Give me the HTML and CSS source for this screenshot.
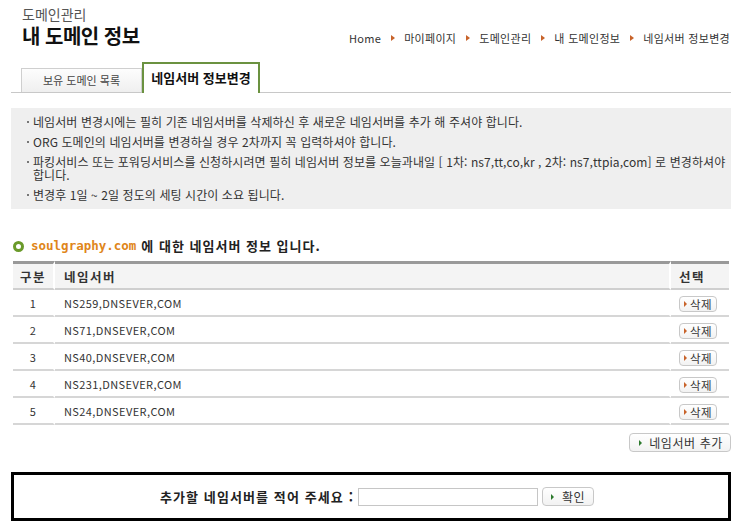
FILE: index.html
```html
<!DOCTYPE html>
<html lang="ko">
<head>
<meta charset="utf-8">
<link rel="stylesheet" href="styles.css">
</head>
<body>
<div class="page">
  <div class="head">
    <div class="titles">
      <div class="sub">도메인관리</div>
      <h1 class="main">내 도메인 정보</h1>
    </div>
    <div class="crumbs">
      <span>Home</span><i class="tri"></i>
      <span>마이페이지</span><i class="tri"></i>
      <span>도메인관리</span><i class="tri"></i>
      <span>내 도메인정보</span><i class="tri"></i>
      <span>네임서버 정보변경</span>
    </div>
  </div>

  <div class="tabs">
    <div class="tab">보유 도메인 목록</div>
    <div class="tab active">네임서버 정보변경</div>
  </div>

  <ul class="notice">
    <li>네임서버 변경시에는 필히 기존 네임서버를 삭제하신 후 새로운 네임서버를 추가 해 주셔야 합니다.</li>
    <li>ORG 도메인의 네임서버를 변경하실 경우 2차까지 꼭 입력하셔야 합니다.</li>
    <li>파킹서비스 또는 포워딩서비스를 신청하시려면 필히 네임서버 정보를 오늘과내일 [ 1차: ns7,tt,co,kr , 2차: ns7,ttpia,com] 로 변경하셔야 합니다.</li>
    <li>변경후 1일 ~ 2일 정도의 세팅 시간이 소요 됩니다.</li>
  </ul>

  <h2 class="sec"><span class="ring"></span><span class="dom">soulgraphy.com</span> 에 대한 네임서버 정보 입니다.</h2>

  <table class="ns">
    <thead>
      <tr><th class="c1">구분</th><th class="c2">네임서버</th><th class="c3">선택</th></tr>
    </thead>
    <tbody>
      <tr><td class="c1">1</td><td class="c2">NS259,DNSEVER,COM</td><td class="c3"><span class="btn"><i class="tri"></i>삭제</span></td></tr>
      <tr><td class="c1">2</td><td class="c2">NS71,DNSEVER,COM</td><td class="c3"><span class="btn"><i class="tri"></i>삭제</span></td></tr>
      <tr><td class="c1">3</td><td class="c2">NS40,DNSEVER,COM</td><td class="c3"><span class="btn"><i class="tri"></i>삭제</span></td></tr>
      <tr><td class="c1">4</td><td class="c2">NS231,DNSEVER,COM</td><td class="c3"><span class="btn"><i class="tri"></i>삭제</span></td></tr>
      <tr><td class="c1">5</td><td class="c2">NS24,DNSEVER,COM</td><td class="c3"><span class="btn"><i class="tri"></i>삭제</span></td></tr>
    </tbody>
  </table>

  <div class="addrow">
    <span class="btn big"><i class="tri green"></i>네임서버 추가</span>
  </div>

  <div class="addbox">
    <label class="addlabel">추가할 네임서버를 적어 주세요 :</label>
    <span class="field"></span>
    <span class="btn ok"><i class="tri green"></i>확인</span>
  </div>
</div>
</body>
</html>
```
FILE: styles.css
```css
html, body { margin: 0; padding: 0; background: #fff; }
body {
  font-family: "Noto Sans CJK KR", "Liberation Sans", sans-serif;
  color: #333;
  font-size: 12px;
}
.page { width: 720px; padding: 0 8px 0 11px; }

.head { box-sizing: border-box; height: 50px; padding-top: 6px; display: flex; justify-content: space-between; align-items: flex-start; }
.titles { padding-left: 11px; }
.sub { font-size: 14px; line-height: 16px; height: 16px; color: #555; }
.main { margin: 3px 0 0 0; font-size: 20px; line-height: 21px; height: 21px; font-weight: 700; color: #111; letter-spacing: -0.5px; }
.crumbs { display: flex; align-items: center; font-size: 11px; line-height: 14px; color: #333; margin-top: 25px; padding-right: 1px; letter-spacing: 0.3px; }
.crumbs .tri { margin: 0 9px 0 10px; }

.tri {
  display: inline-block;
  width: 0; height: 0;
  border-left: 4px solid #c8632a;
  border-top: 3px solid transparent;
  border-bottom: 3px solid transparent;
}
.tri.green { border-left-color: #2d7a2d; }

.tabs { display: flex; align-items: flex-end; border-bottom: 1px solid #c8c8c8; padding-left: 10px; height: 42px; }
.tab {
  box-sizing: border-box;
  width: 121px; height: 24px; line-height: 23px; text-align: center;
  font-size: 11px; color: #444;
  border: 1px solid #cfcfcf; border-bottom: none;
  background: linear-gradient(#fdfdfd, #efefef);
}
.tab.active {
  width: 118px; height: 31px; line-height: 28px;
  border: 2px solid #6b9240; border-bottom: none;
  background: #fff; color: #111; font-weight: 700; font-size: 13px;
  margin-bottom: -1px;
}

.notice {
  list-style: none; margin: 15px 0 0 0; padding: 7px 1px 8px 12px;
  background: #efefef; font-size: 12px; line-height: 13px; color: #333; letter-spacing: 0.08px;
  word-break: keep-all;
}
.notice li { position: relative; padding-left: 10px; margin: 0 0 7px 0; }
.notice li:last-child { margin-bottom: 0; }
.notice li::before { content: ""; position: absolute; left: 4px; top: 6px; width: 2px; height: 2px; background: #777; }

.sec { margin: 29px 0 0 2px; font-size: 13px; line-height: 16px; height: 16px; font-weight: 700; color: #222; display: flex; align-items: center; letter-spacing: 1px; }
.ring { display: inline-block; width: 5px; height: 5px; border: 3px solid #6a9a2a; border-radius: 50%; margin-right: 7px; }
.dom { color: #e0861a; margin-right: 5px; font-family: "DejaVu Sans Mono", monospace; font-size: 12.5px; letter-spacing: 0; }

.ns { width: 716px; margin: 7px 0 0 2px; border-collapse: separate; border-spacing: 0; font-size: 11px; letter-spacing: 0.4px; }
.ns th, .ns td { padding: 0; }
.ns th { height: 24px; background: #f4f4f4; border-top: 3px solid #999; border-bottom: 2px solid #cfcfcf; font-weight: 700; font-size: 12.5px; color: #333; text-align: left; letter-spacing: 1.5px; }
.ns td { height: 25px; border-bottom: 2px solid #d6d6d6; color: #333; }
.ns .c1 { width: 40px; text-align: center; border-right: 2px solid #fff; }
.ns .c2 { padding-left: 9px; border-right: 2px solid #fff; }
.ns .c3 { width: 50px; padding-left: 8px; }

.btn {
  display: inline-flex; align-items: center; gap: 3px;
  border: 1px solid #c8c8c8; border-radius: 4px;
  background: linear-gradient(#fff, #f2f2f2);
  height: 14px; padding: 0 4px 0 4px; font-size: 11.5px; color: #333; line-height: 14px; letter-spacing: 0.5px;
}
.btn .tri { border-left-width: 3px; border-top-width: 3px; border-bottom-width: 3px; }
.addrow { display: flex; justify-content: flex-end; margin-top: 8px; }
.btn.big { height: 17px; padding: 0 7px 0 9px; gap: 7px; font-size: 12px; letter-spacing: 0.6px; }

.addbox {
  box-sizing: border-box;
  margin-top: 20px; border: 3px solid #000; height: 49px;
  display: flex; align-items: center; justify-content: center; gap: 4px;
}
.addlabel { font-weight: 700; font-size: 13px; color: #222; margin-left: 12px; letter-spacing: 1.1px; }
.field { display: inline-block; width: 178px; height: 16px; border: 1px solid #c6c6c6; background: #fff; }
.btn.ok { height: 17px; padding: 0 8px 0 8px; gap: 8px; font-size: 12px; letter-spacing: 0.5px; }
```
